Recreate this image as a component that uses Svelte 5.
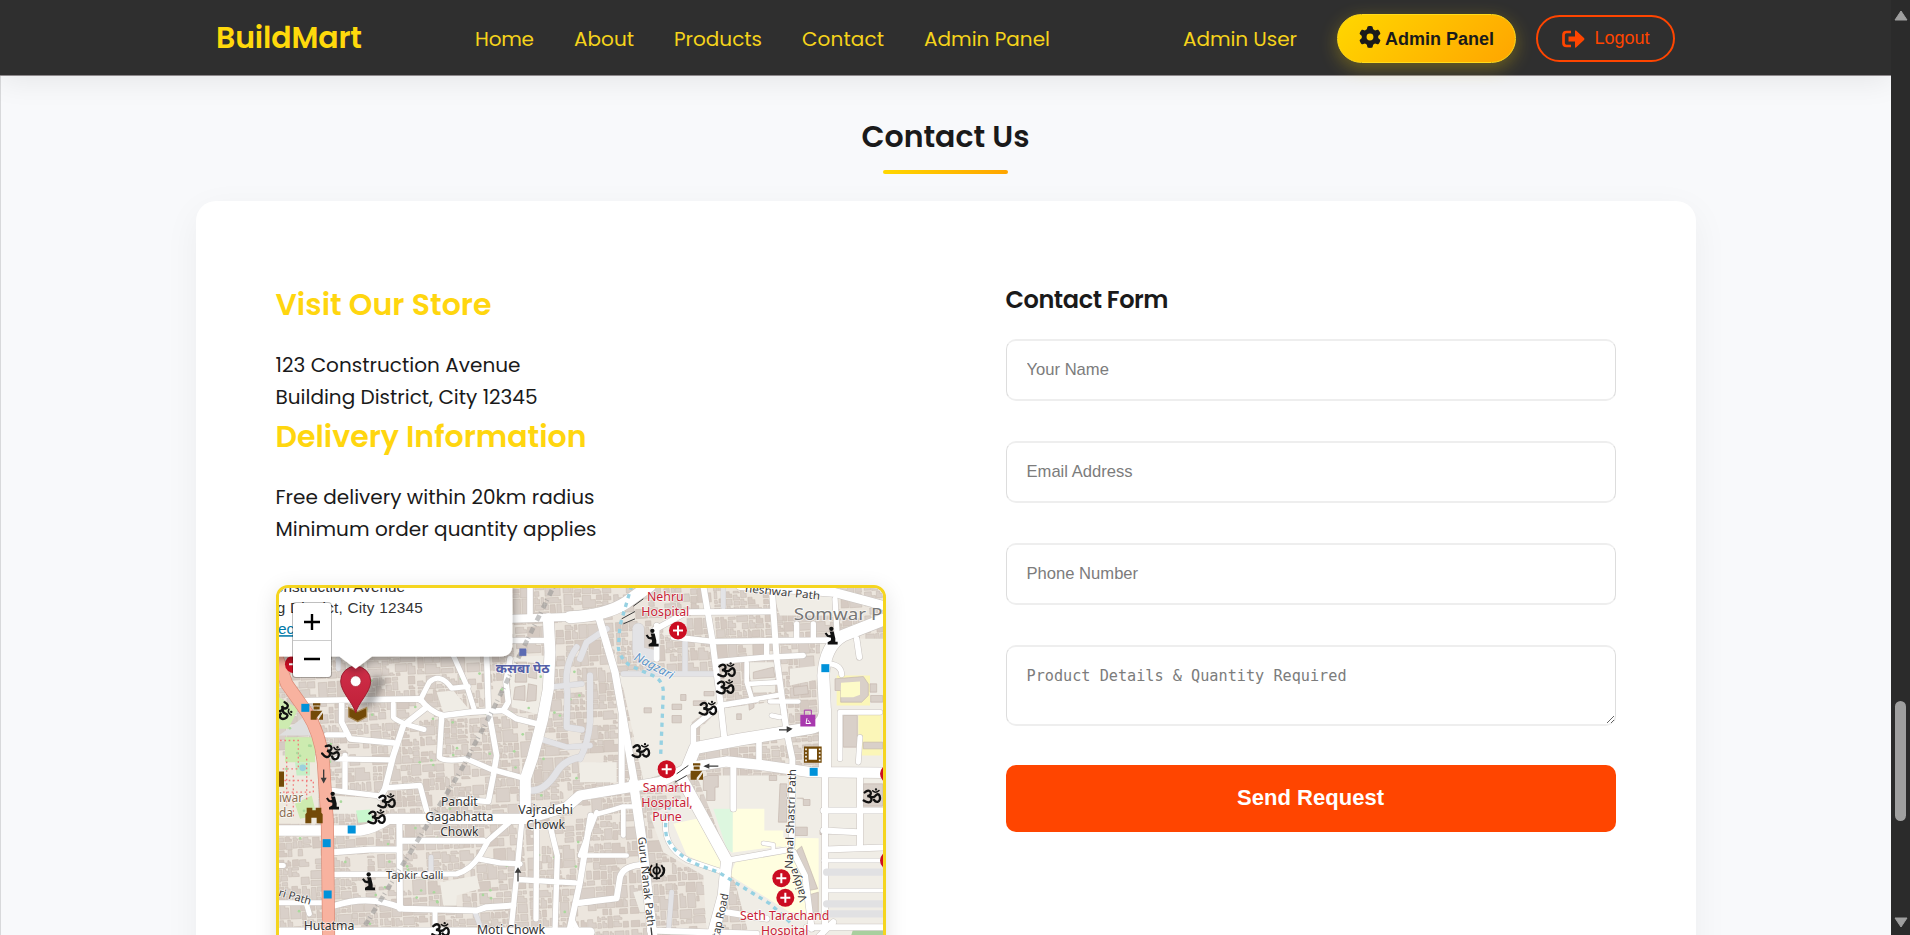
<script>
  // Spreads a label's letters so it fills the width set for it in the layout.
  function track(node, width) {
    const range = document.createRange();
    range.selectNodeContents(node);
    const natural = range.getBoundingClientRect().width;
    node.style.letterSpacing = `${(width - natural) / (node.textContent.length - 1)}px`;
    node.style.width = `${width}px`;
  }

  const links = [
    ['Home', 59], ['About', 60], ['Products', 88], ['Contact', 82], ['Admin Panel', 126]
  ];
  const fields = [['Your Name', 'text'], ['Email Address', 'email'], ['Phone Number', 'tel']];

  // Small building footprints: city blocks divided at random into plots.
  let seed = 11;
  const rnd = () => (seed = (seed * 16807) % 2147483647) / 2147483647;
  function footprints() {
    let light = '', dark = '';
    const split = (x, y, w, h) => {
      const long = Math.max(w, h), short = Math.min(w, h);
      if (long > 52 || (long > 30 && rnd() > 0.35) || (long > 20 && long / short > 2.6)) {
        const f = 0.3 + rnd() * 0.4;
        if (w > h * (0.8 + rnd() * 0.4)) { split(x, y, w * f, h); split(x + w * f, y, w * (1 - f), h); }
        else { split(x, y, w, h * f); split(x, y + h * f, w, h * (1 - f)); }
        return;
      }
      const r = rnd();
      if (r < 0.13) return;
      const j = () => rnd() * 2.5;
      const l = x + 1 + j(), t = y + 1 + j(), a = x + w - 1 - j(), b = y + h - 1 - j();
      const n = r > 0.65 ? Math.min(w, h) / 3 : 0;
      const p = (v) => v.toFixed(1);
      const d = `M${p(l)} ${p(t)}H${p(a - n)}v${p(n)}h${p(n)}L${p(a + rnd())} ${p(b)}H${p(l - rnd())}Z`;
      if (rnd() > 0.7) dark += d; else light += d;
    };
    for (let y = -120; y < 1200; y += 132)
      for (let x = -150; x < 2000; x += 150) split(x + rnd() * 4, y + rnd() * 4, 146, 128);
    return { light, dark };
  }
  const blocks = footprints();

  const trees = Array.from({ length: 90 }, () => [30 + rnd() * 900, 250 + rnd() * 800]);

  const greyRoads = [
    [18, 'M930 250L950 200L1010 160'], [18, 'M920 215Q880 270 892 350L890 455L935 462'],
    [18, 'M960 300L960 440Q955 500 930 550'], [16, 'M1060 295H1340M1245 200V292'],
    [34, 'M1105 160V230L1150 240'], [16, 'M840 335L935 325M810 490L890 515L960 510'],
    [20, 'M785 645Q825 645 860 590Q880 555 930 545'], [14, 'M483 845V885M615 1010L630 1050'],
    [14, 'M1205 950L1196 1060M1360 40V95M205 250V280']
  ];
  const roads = [
    [17, 'M780 30V125M727 195H820M720 250L708 320L715 380L700 405L740 430L800 445'],
    [17, 'M650 240L655 400L680 540L670 600L655 678L570 672'],
    [15, 'M550 240L590 330L612 400M450 375L478 320Q510 290 545 338L595 333'],
    [17, 'M110 375L450 370Q480 410 520 420L600 410L700 405M215 385V440L240 490L370 502'],
    [15, 'M370 385V425Q380 440 462 462'],
    [18, 'M470 395L400 450L370 540L345 640L330 665'],
    [16, 'M515 425L508 545Q520 560 590 550L660 580L750 605M170 478H222'],
    [16, 'M200 550L365 553M225 540V640M180 644L335 662M345 637L450 630L470 705'],
    [18, 'M388 730L390 1000M390 796H640M190 830L300 822H388'],
    [16, 'M190 897L560 895Q600 885 630 840L655 795L730 730M625 850L690 862L750 865'],
    [16, 'M757 720L740 900L725 1045M745 912L915 922M800 750L798 1030M840 750L862 840L855 1070'],
    [18, 'M962 720L930 920L895 1080M195 990Q300 955 400 1000L620 1005L650 995L730 990'],
    [15, 'M495 1005V1055M27 870H40M110 988L118 1015M27 982H160M915 985L970 978M905 1030L925 1070'],
    [24, 'M727 130L960 122'], [22, 'M985 120L1035 290L1060 430L1093 620'],
    [18, 'M1055 420V640M1300 30L1325 180L1350 370L1362 480'],
    [17, 'M1150 165L1250 110L1510 108M1160 150V250M1210 185L1330 198L1680 194'],
    [18, 'M1505 30L1520 250L1550 470L1567 550L1565 810'],
    [16, 'M1695 70L1702 190M1580 145V190M1630 145V190M1490 200V242M1345 258L1480 246L1600 240'],
    [14, 'M1430 262V320L1446 372L1530 358M1436 325L1530 320M1505 420L1530 425M1500 378H1585'],
    [17, 'M1270 510V455L1350 390L1460 372M1467 500V560M1760 190L1768 245'],
    [15, 'M1710 550V410H1830M1770 485L1765 560M1680 265Q1715 270 1715 298'],
    [18, 'M1390 565V700M1665 590V1050M1770 600V815M1660 705H1860M1660 765L1765 770M1665 822L1860 815'],
    [12, 'M1665 945H1860M1480 803L1510 808V830M1660 855H1860'],
    [14, 'M980 710L930 840H1070M985 715Q1040 700 1060 693H1100M1060 700V780M1020 710'],
    [18, 'M930 982L1040 968L1050 905Q1060 870 1120 868M1140 1065L1460 1075M1370 1010L1490 1030'],
    [18, 'M1570 830L1605 900L1625 1060M1690 1040L1640 1090M1610 1055H1860'],
    [15, 'M1190 720Q1170 810 1255 855L1345 885'],
    [17, 'M1370 855L1545 824'],
    [33, 'M835 130L840 230L835 340L818 430L788 545L766 610L766 720'],
    [31, 'M27 765H270Q310 760 355 730H770L890 695L930 660L1080 635L1170 620L1260 575L1370 558L1470 568L1620 590L1860 592'],
    [36, 'M900 125Q1010 120 1070 80L1140 30'],
    [28, 'M1090 620L1115 790L1148 1080'],
    [27, 'M1410 30L1690 50L1860 95'],
    [36, 'M1250 580L1275 518L1410 492L1620 458Q1660 450 1665 410L1660 300Q1665 210 1720 180L1860 125M1665 400V590'],
    [34, 'M1230 600L1370 855L1360 960L1325 1090'],
    [28, 'M0 1070H960']
  ];

  const oms = [[1370, 285], [1366, 336], [1314, 400], [1113, 527], [40, 405, 70], [184, 531, 20], [350, 678], [320, 726], [512, 1064], [1806, 663]];
  const monks = [[1147, 188], [1684, 182], [188, 677], [296, 919]];
  const crosses = [[1224, 165], [1190, 581], [1534, 908], [1546, 967], [1857, 595], [1857, 855], [72, 266]];
  const stops = [[106, 397], [1666, 278], [1631, 589], [245, 762], [170, 803], [173, 957]];

  // Place names: text, centre x, baseline y, width.
  const hospitals = [
    ['Nehru', 1186, 76, 110], ['Hospital', 1186, 121, 144],
    ['Samarth', 1191, 649, 146], ['Hospital,', 1191, 693, 154], ['Pune', 1191, 737, 89],
    ['Seth Tarachand', 1544, 1033, 268], ['Hospital', 1544, 1077, 142]
  ];
  const places = [
    ['Pandit', 568, 690, 110], ['Gagabhatta', 568, 735, 204], ['Chowk', 568, 780, 115],
    ['Vajradehi', 827, 716, 164], ['Chowk', 827, 760, 116],
    ['Hutatma', 177, 1063, 152], ['Chowk', 177, 1107, 110], ['Moti Chowk', 723, 1075, 204]
  ];
  // Street names: text, transform of the middle of the name, width.
  const streets = [
    ['Tapkir Galli', 'translate(434 899)', 172], ['ri Path', 'translate(75 964) rotate(16)', 100],
    ['neshwar Path', 'translate(1538 50) rotate(6)', 226], ['Guru Nanak Path', 'translate(1129 918) rotate(84)', 270],
    ['tap Road', 'translate(1351 1020) rotate(-78)', 134], ['Nanal Shastri Path', 'translate(1562 730) rotate(-88)', 300],
    ['Vaidya', 'translate(1585 928) rotate(-108)', 104]
  ];
</script>

<div class="page">
  <div class="content">
    <header>
      <a class="brand" href="#home"><span use:track={146}>BuildMart</span></a>
      <nav>
        {#each links as [label, width]}
          <a href="#top"><span use:track={width}>{label}</span></a>
        {/each}
      </nav>
      <div class="account">
        <span class="user" use:track={114}>Admin User</span>
        <button class="admin">
          <svg width="22" height="22" viewBox="0 0 512 512"><path fill="#1a1a1a" d="M495.900 166.600c3.200 8.700 .5 18.400-6.400 24.600l-43.300 39.400c1.100 8.300 1.700 16.800 1.700 25.400s-.6 17.100-1.700 25.400l43.300 39.400c6.900 6.200 9.600 15.900 6.400 24.600c-4.400 11.900-9.700 23.300-15.800 34.300l-4.700 8.100c-6.600 11-14 21.400-22.100 31.200c-5.900 7.200-15.700 9.600-24.500 6.800l-55.700-17.700c-13.400 10.300-28.200 18.900-44 25.400l-12.500 57.100c-2 9.100-9 16.300-18.200 17.800c-13.800 2.300-28 3.500-42.500 3.500s-28.700-1.200-42.500-3.500c-9.200-1.500-16.200-8.700-18.200-17.800l-12.500-57.100c-15.800-6.500-30.600-15.100-44-25.400L83.100 425.900c-8.800 2.800-18.600 .3-24.500-6.800c-8.100-9.800-15.500-20.200-22.100-31.200l-4.700-8.100c-6.100-11-11.400-22.400-15.800-34.300c-3.200-8.700-.5-18.400 6.400-24.600l43.300-39.400C64.600 273.100 64 264.600 64 256s.6-17.100 1.700-25.400L22.400 191.200c-6.900-6.200-9.600-15.900-6.400-24.600c4.400-11.900 9.700-23.300 15.800-34.300l4.700-8.100c6.600-11 14-21.400 22.100-31.200c5.900-7.200 15.700-9.600 24.500-6.800l55.700 17.700c13.400-10.300 28.200-18.900 44-25.400l12.500-57.100c2-9.100 9-16.300 18.200-17.800C227.300 1.200 241.500 0 256 0s28.700 1.200 42.500 3.500c9.200 1.500 16.200 8.700 18.200 17.800l12.500 57.100c15.800 6.500 30.600 15.100 44 25.400l55.700-17.700c8.800-2.800 18.600-.3 24.500 6.800c8.100 9.800 15.500 20.200 22.100 31.200l4.700 8.100c6.100 11 11.400 22.400 15.800 34.300zM256 336a80 80 0 1 0 0-160 80 80 0 1 0 0 160z"/></svg>
          <span use:track={109}>Admin Panel</span>
        </button>
        <button class="logout">
          <svg width="23" height="18" viewBox="0 0 23 18"><path d="M9 2H4.500Q1.500 2 1.500 5V13Q1.500 16 4.500 16H9" fill="none" stroke="#ff4500" stroke-width="2.700"/><path fill="#ff4500" d="M6.500 6.500H13V1Q13 0 14 .6L22 8Q23 9 22 10L14 17.400Q13 18 13 17V11.500H6.500Z"/></svg>
          <span use:track={55}>Logout</span>
        </button>
      </div>
    </header>

    <section>
      <h2><span use:track={168}>Contact Us</span></h2>
      <div class="rule"></div>
      <div class="card">
        <div class="info">
          <h3><span use:track={216}>Visit Our Store</span></h3>
          <p><span use:track={245}>123 Construction Avenue</span><br /><span use:track={262}>Building District, City 12345</span></p>
          <h3><span use:track={311}>Delivery Information</span></h3>
          <p><span use:track={319}>Free delivery within 20km radius</span><br /><span use:track={321}>Minimum order quantity applies</span></p>
          <div class="map">
            <svg viewBox="27 37.500 1812 1044" width="604" height="348">
              <defs>
                <linearGradient id="pin" x1="0" y1="0" x2="0" y2="1"><stop offset="0" stop-color="#cf2f49" /><stop offset="1" stop-color="#c01f38" /></linearGradient>
                <filter id="shade" x="-20%" y="-20%" width="140%" height="160%"><feDropShadow dx="0" dy="9" stdDeviation="14" flood-opacity=".4" /></filter>
                <filter id="smudge" x="-40%" y="-40%" width="180%" height="180%"><feGaussianBlur stdDeviation="9" /></filter>
                <g id="om" fill="none" stroke="#111" stroke-width="7" stroke-linecap="round">
                  <path d="M-22-12Q-10-23-4-13Q-1-3-14-1Q1 0-2 12Q-7 23-25 12M-3 1Q7 4 11-3Q18-11 23-2Q27 12 17 16Q10 17 6 10" />
                  <path d="M2-17Q11-8 21-18" stroke-width="4.500" /><circle cx="12" cy="-21" r="1.500" stroke-width="4" />
                </g>
                <g id="monk" fill="#111"><circle cx="0" cy="-22" r="6.500" /><path d="M-5-14H7L12 7V17H19V25H-11V18L-1 12V5L-13 2L-20-8L-15-11L-8-3L-2-4Z" /></g>
                <g id="cross"><circle r="27" fill="#cb0d22" /><path d="M-15 0H15M0-15V15" stroke="#fff" stroke-width="6" /></g>
                <g id="gate" fill="#734a08"><path d="M-11-27H11V-20H-11ZM-9-17H9V-8H-9ZM-18-4H17L0 17V23H-18ZM19 2V23H5Z" /></g>
              </defs>
              <rect x="0" y="0" width="1900" height="1100" fill="#ece6de" />
              <g stroke="#c6bab0" stroke-width="1.500" transform="rotate(-3 900 500)"><path d={blocks.light} fill="#d9d0c9" /><path d={blocks.dark} fill="#d5cac2" /></g>

              <g fill="#f0ede6">
                <path d="M1040 300H1335L1350 375L1265 440L1270 520L1250 570L1120 615L1060 340Z" />
                <path d="M1350 400L1540 375L1548 460L1290 500V460ZM1430 260H1515V350H1450ZM1560 280L1650 270V310L1560 330Z" />
                <path d="M1650 190H1860V1100H1650ZM1280 600H1660V1090H1440L1380 860Z" />
                <path d="M1140 720L1250 660L1360 860L1340 1080H1310L1300 900L1180 830ZM930 560H1040V620H930Z" />
                <path d="M1500 30H1690V120H1530ZM500 350L550 345L600 405L520 410ZM715 245L825 240L815 420L725 395Z" />
                <path d="M510 920L620 900L630 940L560 960V990H520ZM180 660L330 668V715H190ZM1180 130L1250 120V180H1180ZM1090 950L1140 940V1010H1110Z" />
              </g>
              <g fill="#fffee0">
                <path d="M1210 745L1300 725L1362 860L1345 882L1250 840ZM1388 700H1483V765H1540V786L1646 788V1010H1560L1380 900L1400 850L1560 825L1530 812L1385 832Z" />
                <path d="M1700 300H1800V390H1700ZM1765 415H1835V540H1765Z" fill="#fbf6b8" />
              </g>
              <path d="M1330 700H1388V832L1370 820Z" fill="#ddf7df" />
              <path d="M1750 1060H1840V1090H1740Z" fill="#a9cf9e" />
              <g fill="#d9d0c9" stroke="#c4b7ad" stroke-width="2">
                <path d="M740 260H770V320H735ZM775 262L800 265V310L775 305ZM735 335L765 330V375L730 372ZM775 325L800 330L798 375L770 378Z" />
                <path d="M1232 357H1248V375H1232ZM1206 386H1235V402H1206ZM1206 420H1234V442H1206ZM1122 397H1144V412H1122ZM1302 348H1332V361H1302ZM1270 376H1308V390H1270ZM1400 415H1414V432H1400ZM1436 380H1452V396L1438 404Z" />
                <path d="M1450 290L1510 275L1515 305L1450 310ZM1570 335L1612 330L1615 355L1572 360ZM1695 310L1780 303L1795 325V360L1775 380H1712V345H1695ZM1720 420H1762V515H1720Z" />
                <path d="M1800 325H1820V350H1800ZM1802 360H1838V380H1802ZM1780 500H1838V520H1780ZM1315 600H1345V635H1335V675H1310L1310 645H1300V605ZM1498 600H1520V615H1498ZM1530 625H1550V740H1525ZM1580 668H1600V690H1620V672H1600M1650 764H1665V777H1650ZM1575 755H1612V780H1575Z" />
                <path d="M1580 825L1595 812L1643 940L1615 945ZM1610 960L1645 950V1020L1625 1010ZM1780 625H1838V692H1780Z" />
              </g>
              <path d="M1713 322L1770 318V358L1750 365H1712Z" fill="#fdfbc8" />

              <g>
                <path d="M27 540H145V745H27Z" fill="#eee9df" />
                <path d="M27 365L85 400L55 460H27ZM45 485H135V560H45ZM75 685L125 660L140 720L90 730Z" fill="#cdebb0" />
                <path d="M27 480L100 425L125 480Z" fill="#dfdfdf" /><path d="M75 560H120V600H80Z" fill="#c6eec6" />
                <path d="M258 705L300 702L310 738L265 742Z" fill="#c9f7ce" />
                <path d="M30 495H85V580H30M50 545V690M30 615H130V650H30M110 550V680M70 600V730" fill="none" stroke="#f27d7d" stroke-width="4" stroke-dasharray="5 8" />
                <circle cx="98" cy="577" r="10" fill="#9cd1dd" />
              </g>
              {#each trees as [x, y]}<circle cx={x} cy={y} r="4" fill="#a9d99c" />{/each}

              <g fill="none" stroke-linejoin="round" stroke-linecap="round">
                {#each greyRoads as [w, d]}<path {d} stroke="#cfcccc" stroke-width={w + 2} />{/each}
                {#each roads as [w, d]}<path {d} stroke="#c9c4c0" stroke-width={w + 3} />{/each}
                {#each greyRoads as [w, d]}<path {d} stroke="#e3e3e6" stroke-width={w} />{/each}
                {#each roads as [w, d]}<path {d} stroke="#fff" stroke-width={w} />{/each}
                <path d="M1670 985H1838M1670 1015H1838M1670 890H1838" stroke="#e1e1e3" stroke-width="22" />
                <path d="M10 215L50 325L110 410Q150 470 160 560L172 740L176 1090" stroke="#da8b77" stroke-width="39" />
                <path d="M10 215L50 325L110 410Q150 470 160 560L172 740L176 1090" stroke="#f8b29f" stroke-width="35" />
              </g>
              <path d="M1085 30L1050 150L1045 215Q1050 250 1080 270L1140 297Q1180 310 1180 350L1172 540M1180 550M1200 690Q1180 740 1190 785Q1215 840 1290 870L1345 890L1500 985L1560 1040" fill="none" stroke="#96d1e2" stroke-width="10" stroke-dasharray="13 14" />
              <path d="M850 35L670 400L570 590L285 1050" fill="none" stroke="#8c8c8c" stroke-width="14" stroke-dasharray="3 7 18 14" opacity=".5" />

              <g stroke="#3b3b3b" stroke-width="4" fill="#3b3b3b">
                <path d="M1527 463H1558M1345 572H1305M744 918V882M161 582V612M1143 1056L1146 1082" />
                <path d="M1568 460L1550 452V472ZM1300 572L1318 564V580ZM744 875L734 892H754ZM161 624L152 607H170Z" stroke="none" />
                <path d="M1090 92L1120 70M1055 130L1095 108M1060 145L1095 130M1220 595L1255 570M1215 620L1250 600" stroke-width="3" />
              </g>
              {#each stops as [x, y]}<rect x={x - 12} y={y - 12} width="24" height="24" fill="#0092da" />{/each}
              <rect x="748" y="219" width="21" height="22" fill="#5c6bb3" />
              {#each oms as [x, y, a = 0]}<use href="#om" transform={`translate(${x} ${y}) rotate(${a})`} />{/each}
              {#each monks as [x, y]}<use href="#monk" {x} {y} />{/each}
              {#each crosses as [x, y]}<use href="#cross" {x} {y} />{/each}
              <use href="#gate" x="140" y="410" /><use href="#gate" x="1280" y="590" />
              <path d="M110 697H127V704H137V697H154V712L158 716V743H140V727H124V743H106V716L110 712ZM27 588H42V634H27Z" fill="#734a08" />
              <path d="M1602 513H1655V562H1602Z" fill="#734a08" /><path d="M1616 520H1641V553H1616Z" fill="#fff" /><path d="M1608 519V560M1649 519V560" stroke="#fff" stroke-width="5" stroke-dasharray="5 6" />
              <path d="M1591 418H1636V453H1591Z" fill="#a839ae" /><path d="M1603 418V404H1624V418" fill="none" stroke="#a839ae" stroke-width="3" /><path d="M1611 428L1608 444H1622L1614 434" fill="none" stroke="#fff" stroke-width="3" />
              <g fill="none" stroke="#111" stroke-width="5.500"><circle cx="1160" cy="885" r="10" /><path d="M1160 863V912M1146 869Q1130 887 1150 904M1174 869Q1190 887 1170 904M1150 908H1170M1138 876Q1134 892 1146 902M1182 876Q1186 892 1174 902" /></g>

              <g class="label" font-size="36">
                <g fill="#c91f37">
                  {#each hospitals as [name, x, y, w]}<text {x} {y} textLength={w} lengthAdjust="spacingAndGlyphs">{name}</text>{/each}
                </g>
                <g fill="#333">
                  {#each places as [name, x, y, w]}<text {x} {y} textLength={w} lengthAdjust="spacingAndGlyphs">{name}</text>{/each}
                </g>
                <g fill="#3c3c3c" font-size="33">
                  {#each streets as [name, transform, w]}<text {transform} y="11" textLength={w} lengthAdjust="spacingAndGlyphs">{name}</text>{/each}
                </g>
                <text class="start" x="1571" y="134" font-size="50" fill="#777" textLength="266" lengthAdjust="spacingAndGlyphs">Somwar P</text>
                <g class="start" fill="#8a6d50"><text x="27" y="679" textLength="73" lengthAdjust="spacingAndGlyphs">iwar</text><text x="27" y="723" textLength="42" lengthAdjust="spacingAndGlyphs">da</text></g>
                <text transform="translate(1150 275) rotate(28)" y="8" font-style="italic" fill="#5c95c9" textLength="128" lengthAdjust="spacingAndGlyphs">Nagzari</text>
                <text x="758" y="291" font-weight="700" font-size="36" fill="#5460a8" textLength="162" lengthAdjust="spacingAndGlyphs">कसबा पेठ</text>
              </g>

              <path d="M262 400L310 300L350 310L310 390Z" fill="#222" opacity=".35" filter="url(#smudge)" />
              <path d="M236 396L263 408L290 396V424L263 438L236 424Z" fill="#734a08" stroke="#a88a58" stroke-width="4" />
              <path d="M257 412C250 382 212 350 212 317A45 45 0 0 1 302 317C302 350 264 382 257 412Z" fill="url(#pin)" stroke="#9e1f31" stroke-width="3" />
              <circle cx="257" cy="317" r="16" fill="#fff" stroke="#a92034" stroke-width="2" />
              <path d="M-180-20H727V207Q727 243 691 243H306L257 280L208 243H-180Z" fill="#fff" filter="url(#shade)" />
              <g font-family="Liberation Sans, Arial, sans-serif" font-size="46" fill="#333">
                <text x="405" y="49" text-anchor="end">123 Construction Avenue</text>
                <text x="458" y="112" text-anchor="end" textLength="580">Building District, City 12345</text>
                <text x="-122" y="176" fill="#0078a8" text-decoration="underline">Get Directions</text>
              </g>
            </svg>
            <div class="zoom">
              <button aria-label="Zoom in"><svg width="16" height="16"><path d="M0 8H16M8 0V16" stroke="#000" stroke-width="2.400" /></svg></button>
              <button aria-label="Zoom out"><svg width="16" height="16"><path d="M0 8H16" stroke="#000" stroke-width="2.400" /></svg></button>
            </div>
          </div>
        </div>

        <form>
          <h4><span use:track={163}>Contact Form</span></h4>
          {#each fields as [label, type]}
            <input {type} placeholder={label} />
          {/each}
          <textarea placeholder="Product Details &amp; Quantity Required"></textarea>
          <button type="button" class="send"><span use:track={147}>Send Request</span></button>
        </form>
      </div>
    </section>
  </div>

  <div class="scrollbar">
    <svg width="14" height="11"><path d="M7 1L13 10H1Z" fill="#9f9f9f" stroke="#9f9f9f" stroke-linejoin="round" /></svg>
    <div class="thumb"></div>
    <svg width="14" height="11"><path d="M7 10L13 1H1Z" fill="#9f9f9f" stroke="#9f9f9f" stroke-linejoin="round" /></svg>
  </div>
</div>

<style>
  :global(body) { margin: 0; background: #2c2c2c; overflow: hidden; }
  .page { display: flex; width: 1910px; height: 935px; overflow: hidden; font-family: Poppins, Inter, sans-serif; font-feature-settings: "cv11"; }
  .content { width: 1891px; height: 935px; overflow: hidden; background: #f8f9fb; box-sizing: border-box; display: flex; flex-direction: column; box-shadow: inset 1px 0 #d8d9db; }
  span { display: inline-block; white-space: nowrap; }
  h2, h3, h4, p { margin: 0; }
  button { font-family: "Liberation Sans", Arial, sans-serif; font-feature-settings: normal; }
  a { color: inherit; text-decoration: none; }

  header { flex: none; position: relative; height: 75px; display: flex; align-items: center; padding-left: 216px; background: #2f2f2f; border-bottom: 1px solid #8d888b; color: #f5d31b; font-size: 20px; box-shadow: 0 5px 30px rgba(0, 0, 0, .08); }
  .brand { width: 259px; padding-top: 1px; font-size: 30px; font-weight: 600; color: #ffd90b; }
  nav { display: flex; gap: 40px; width: 708px; padding-top: 2px; }
  .account { display: flex; align-items: center; }
  .user { margin-right: 40px; padding-top: 2px; }
  .admin { box-sizing: border-box; width: 179px; height: 49px; margin: 2px 20px 0 0; display: flex; align-items: center; justify-content: center; gap: 4px; padding: 0; border: 1.500px solid #ffdb1b; border-radius: 25px; background: linear-gradient(135deg, #ffd700, #ffa500); box-shadow: 0 5px 18px rgba(255, 215, 0, .3); color: #1a1a1a; font-size: 18px; font-weight: 700; }
  .admin svg { margin-top: -3px; }
  .admin span { padding-top: 2px; }
  .logout { box-sizing: border-box; width: 139px; height: 47px; margin-top: 2px; display: flex; align-items: center; justify-content: center; gap: 10px; padding: 0; border: 2px solid #ff4500; border-radius: 24px; background: none; color: #ff4500; font-size: 18px; }
  .logout span { padding-bottom: 1px; }

  section { display: flex; flex-direction: column; align-items: center; padding-top: 38px; }
  h2 { font-size: 30px; line-height: 45px; font-weight: 600; color: #1a1a1a; }
  .rule { width: 125px; height: 4px; margin: 11px 0 27px; border-radius: 2px; background: linear-gradient(90deg, #ffd700, #ffa500); }
  .card { box-sizing: border-box; width: 1500px; height: 1100px; padding: 79px 80px; display: grid; grid-template-columns: 610px 610px; gap: 120px; border-radius: 20px; background: #fff; box-shadow: 0 10px 36px rgba(0, 0, 0, .05); }
  h3 { font-size: 30px; line-height: 50px; font-weight: 600; color: #ffd60f; margin-bottom: 19px; }
  h3 + p { font-size: 20px; line-height: 32px; color: #1a1a1a; margin-bottom: -1px; height: 64px; }
  .map { position: relative; box-sizing: border-box; width: 610px; height: 500px; margin-top: 41px; border: 3px solid #f5d51f; border-radius: 12px; overflow: hidden; box-shadow: 0 5px 22px rgba(0, 0, 0, .12); }
  .map > svg { display: block; }
  .label { font-family: "Noto Sans", "Open Sans", sans-serif; text-anchor: middle; paint-order: stroke; stroke: rgba(255, 255, 255, .7); stroke-width: 5px; stroke-linejoin: round; }
  .start { text-anchor: start; }
  .zoom { position: absolute; left: 14px; top: 15px; width: 38px; border-radius: 3px; background: #fff; box-shadow: 0 0 0 1px rgba(0, 0, 0, .25); }
  .zoom button { display: flex; align-items: center; justify-content: center; width: 38px; height: 37px; padding: 0 0 0 1px; border: 0; background: none; }
  .zoom button + button { border-top: 1px solid #ccc; }

  form { display: flex; flex-direction: column; }
  h4 { font-size: 24px; line-height: 38px; font-weight: 600; color: #1a1a1a; margin: 1px 0 20px; }
  input, textarea { box-sizing: border-box; width: 610px; padding: 0 19px 1px 20px; border: solid #eee; border-width: 2px 1px; border-left-color: #ddd; border-right-color: #ddd; border-radius: 10px; background: #fff; outline: none; }
  input { height: 62px; margin-bottom: 40px; font: 16.600px "Liberation Sans", Arial, sans-serif; }
  textarea { height: 81px; padding-top: 20px; margin-bottom: 39px; font: 15.200px "DejaVu Sans Mono", monospace; resize: vertical; overflow: hidden; }
  ::placeholder { color: #7c7c7c; opacity: 1; }
  .send { height: 67px; padding: 0 0 1px; border: 0; border-radius: 10px; background: #ff4500; color: #fff; font-size: 22px; font-weight: 700; }

  .scrollbar { box-sizing: border-box; width: 19px; height: 935px; padding: 10px 0 7px; display: flex; flex-direction: column; align-items: center; background: #2b2b2b; }
  .thumb { width: 11px; height: 120px; margin: 680px 0 auto; border-radius: 6px; background: #9f9f9f; }
</style>
